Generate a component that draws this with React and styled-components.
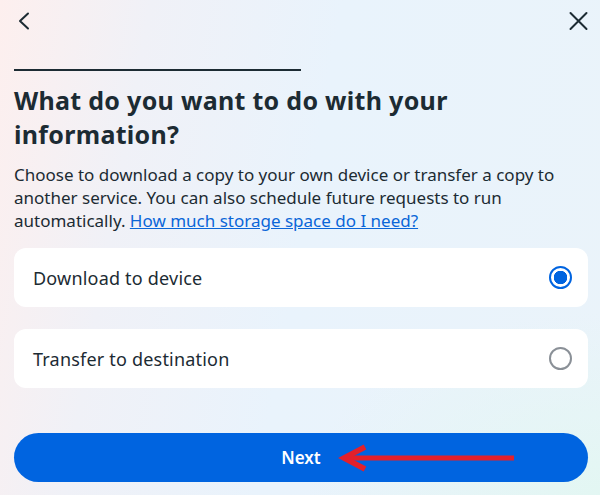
import styled, { createGlobalStyle } from "styled-components";

const GlobalStyle = createGlobalStyle`
    * { box-sizing: border-box; }
    body {
        margin: 0;
        font-family: "Noto Sans", "Open Sans", sans-serif;
        color: #1c2b33;
    }
`;

export default function App() {
    return (
        <>
            <GlobalStyle />
            <Page>
                <TopBar>
                    <IconButton aria-label="Back" $offset={3}>
                        <svg width="14" height="20" viewBox="0 0 14 20">
                            <polyline points="11,2.5 3,10 11,17.5" fill="none" stroke="#1c2b33" strokeWidth="2" strokeLinecap="round" strokeLinejoin="round" />
                        </svg>
                    </IconButton>
                    <IconButton aria-label="Close">
                        <svg width="20" height="20" viewBox="0 0 20 20">
                            <path d="M2.5 2 L18.5 18 M18.5 2 L2.5 18" stroke="#1c2b33" strokeWidth="2" strokeLinecap="round" />
                        </svg>
                    </IconButton>
                </TopBar>
                <Progress>
                    <ProgressFill $value={50} />
                </Progress>
                <Title>What do you want to do with your information?</Title>
                <Description>
                    Choose to download a copy to your own device or transfer a copy to another service. You can also schedule future requests to run automatically.{" "}
                    <Link href="#">How much storage space do I need?</Link>
                </Description>
                <Options>
                    <Option>
                        <span>Download to device</span>
                        <Radio $checked />
                    </Option>
                    <Option>
                        <span>Transfer to destination</span>
                        <Radio />
                    </Option>
                </Options>
                <NextButton>
                    Next
                    <Annotation width="180" height="32" viewBox="0 0 180 32">
                        <path d="M176 16 H8" stroke="#e3202b" strokeWidth="5" fill="none" />
                        <path d="M27 5 L6 16 L27 27" stroke="#e3202b" strokeWidth="5.5" fill="none" strokeLinejoin="miter" />
                    </Annotation>
                </NextButton>
            </Page>
        </>
    );
}

const Page = styled.main`
    width: 600px;
    min-height: 495px;
    padding: 0 12px 13px 14px;
    display: flex;
    flex-direction: column;
    background:
        radial-gradient(ellipse 420px 260px at 100% 100%, rgba(226, 247, 242, 0.9), rgba(226, 247, 242, 0) 70%),
        linear-gradient(100deg, #fdefee 0%, #f0f1f7 22%, #e9f3fc 50%, #eaf3fa 100%);
`;

const TopBar = styled.header`
    height: 42px;
    display: flex;
    align-items: center;
    justify-content: space-between;
`;

const IconButton = styled.button`
    border: none;
    background: none;
    padding: 0;
    margin-left: ${p => p.$offset || 0}px;
    display: flex;
    align-items: center;
    justify-content: center;
    cursor: pointer;
`;

const Progress = styled.div`
    margin-top: 27px;
    height: 2px;
    width: 100%;
`;

const ProgressFill = styled.div`
    height: 100%;
    width: ${p => p.$value}%;
    background: #1c2b33;
`;

const Title = styled.h1`
    margin: 12px 0 0;
    max-width: 540px;
    font-size: 25px;
    line-height: 34px;
    font-weight: 700;
    letter-spacing: 0.3px;
    color: #1c2b33;
`;

const Description = styled.p`
    margin: 12px 0 0;
    font-size: 17px;
    line-height: 23px;
    color: #1c2b33;
`;

const Link = styled.a`
    color: #0a66d8;
    text-decoration: underline;
`;

const Options = styled.div`
    margin-top: 16px;
    display: flex;
    flex-direction: column;
    gap: 22px;
`;

const Option = styled.label`
    height: 59px;
    background: #ffffff;
    border-radius: 12px;
    padding: 0 16px 0 19px;
    display: flex;
    align-items: center;
    justify-content: space-between;
    font-size: 18px;
    letter-spacing: 0.2px;
    color: #1c2b33;
    cursor: pointer;
`;

const Radio = styled.span`
    width: 23px;
    height: 23px;
    border-radius: 50%;
    border: ${p => (p.$checked ? "2.5px solid #0064e0" : "2px solid #8a9097")};
    background: ${p => (p.$checked ? "radial-gradient(circle, #0064e0 0 6.5px, #ffffff 7px)" : "#ffffff")};
`;

const NextButton = styled.button`
    position: relative;
    margin-top: 45px;
    height: 49px;
    width: 100%;
    border: none;
    border-radius: 25px;
    background: #0064e0;
    color: #ffffff;
    font-family: "Noto Sans", "Open Sans", sans-serif;
    font-size: 17px;
    font-weight: 600;
    cursor: pointer;
`;

const Annotation = styled.svg`
    position: absolute;
    left: 324px;
    top: 9px;
    pointer-events: none;
`;
